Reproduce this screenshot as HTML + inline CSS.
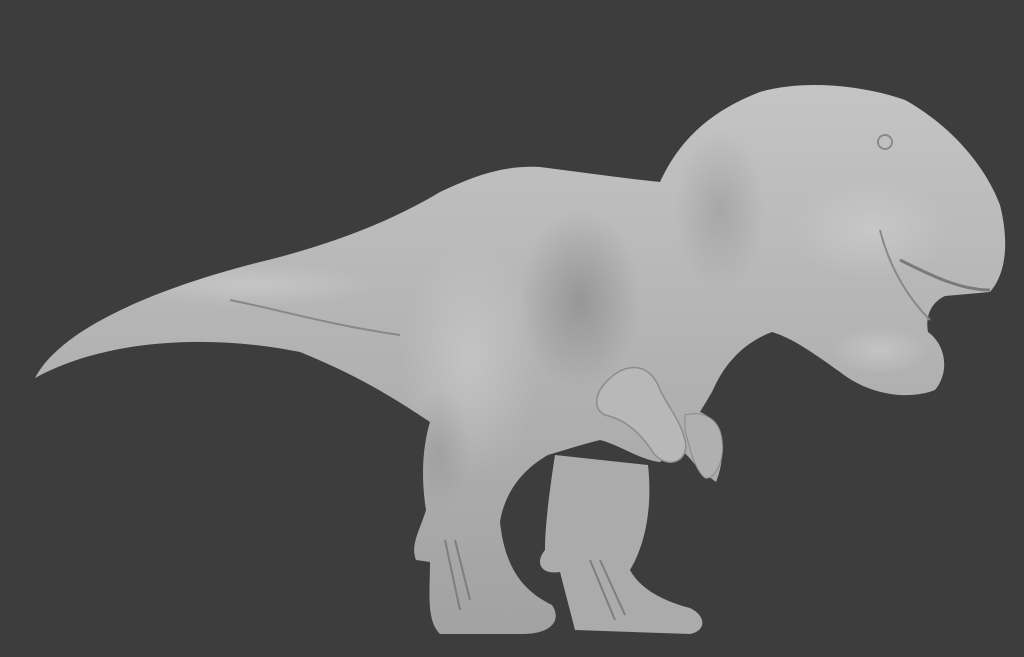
<!DOCTYPE html>
<html><head><style>
html,body{margin:0;padding:0;background:#3d3d3d;width:1024px;height:657px;overflow:hidden}
</style></head><body>
<svg width="1024" height="657" viewBox="0 0 1024 657" xmlns="http://www.w3.org/2000/svg">
<defs>
<linearGradient id="g" x1="0" y1="0" x2="0" y2="1">
<stop offset="0" stop-color="#c4c4c4"/>
<stop offset="0.5" stop-color="#b2b2b2"/>
<stop offset="1" stop-color="#a2a2a2"/>
</linearGradient>
<radialGradient id="sh" cx="0.5" cy="0.5" r="0.5">
<stop offset="0" stop-color="#777" stop-opacity="0.5"/>
<stop offset="1" stop-color="#777" stop-opacity="0"/>
</radialGradient>
<radialGradient id="hl" cx="0.5" cy="0.5" r="0.5">
<stop offset="0" stop-color="#cfcfcf" stop-opacity="0.6"/>
<stop offset="1" stop-color="#cfcfcf" stop-opacity="0"/>
</radialGradient>
<path id="body" d="M35,378 C60,330 150,290 260,262 C330,245 390,222 440,192 C470,178 500,165 540,167 C580,172 620,178 660,182 C675,150 700,115 760,92 C800,80 860,84 905,100 C950,125 985,165 1000,205 C1010,245 1005,275 990,292 L945,296 C932,302 925,315 928,332 C946,345 950,372 935,390 C910,400 870,396 840,372 C812,352 792,338 772,332 C745,342 725,362 712,392 L700,412 C722,420 728,452 716,482 L700,470 C690,460 683,445 672,452 L660,462 C640,460 620,445 600,440 C580,445 565,450 548,455 C525,468 505,490 500,522 C505,570 525,592 552,605 C562,620 552,634 522,634 L440,634 C426,620 430,592 430,562 L416,560 C410,545 420,530 426,510 C420,472 424,442 430,422 C400,402 360,376 300,352 C200,332 100,342 35,378 Z"/>
<clipPath id="c"><use href="#body"/></clipPath>
</defs>
<!-- far leg -->
<path d="M555,455 C548,500 545,530 545,550 C535,562 540,575 560,572 L575,630 L690,634 C708,630 705,615 690,608 C660,600 640,588 630,570 C648,540 652,500 648,465 Z" fill="#ababab"/>
<use href="#body" fill="url(#g)"/>
<g clip-path="url(#c)">
<ellipse cx="580" cy="300" rx="60" ry="90" fill="url(#sh)"/>
<ellipse cx="470" cy="360" rx="70" ry="120" fill="url(#hl)"/>
<ellipse cx="250" cy="285" rx="130" ry="22" fill="url(#hl)"/>
<ellipse cx="720" cy="210" rx="45" ry="80" fill="url(#sh)" opacity="0.6"/>
<ellipse cx="870" cy="230" rx="80" ry="50" fill="url(#hl)"/>
<ellipse cx="880" cy="350" rx="50" ry="25" fill="url(#hl)"/>
<ellipse cx="440" cy="450" rx="30" ry="60" fill="url(#sh)" opacity="0.5"/>
</g>
<path d="M230,300 C280,310 330,325 400,335" stroke="#888" stroke-width="2" fill="none"/>
<!-- arm -->
<path d="M600,390 C620,360 650,360 660,390 C670,410 680,420 685,440 C690,460 670,470 655,455 C645,440 630,420 605,415 C595,410 595,400 600,390 Z" fill="#b8b8b8" stroke="#8c8c8c" stroke-width="1.5"/>
<path d="M685,415 C705,410 720,420 722,440 C725,460 715,480 705,478 C695,470 690,450 685,430 Z" fill="#b0b0b0" stroke="#8a8a8a" stroke-width="1"/>
<!-- mouth -->
<path d="M900,260 C930,275 960,290 990,290" stroke="#7a7a7a" stroke-width="3" fill="none"/>
<path d="M880,230 C890,270 910,300 930,320" stroke="#888" stroke-width="2" fill="none"/>
<circle cx="885" cy="142" r="7" fill="none" stroke="#8a8a8a" stroke-width="2"/>
<path d="M445,540 L460,610 M455,540 L470,600" stroke="#7e7e7e" stroke-width="2"/>
<path d="M590,560 L615,620 M600,560 L625,615" stroke="#7e7e7e" stroke-width="2"/>
</svg>
</body></html>
